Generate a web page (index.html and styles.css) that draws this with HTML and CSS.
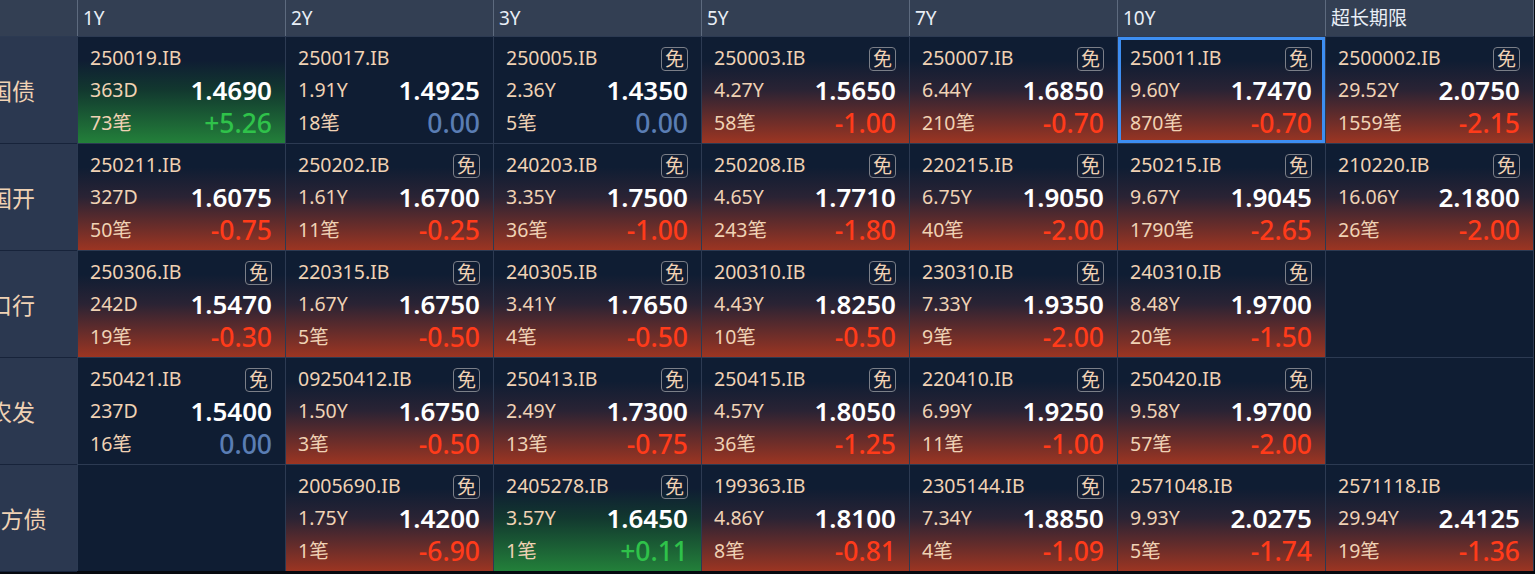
FILE: index.html
```html
<!DOCTYPE html>
<html lang="zh">
<head>
<meta charset="utf-8">
<title>Bond Grid</title>
<link rel="stylesheet" href="styles.css">
</head>
<body>
<div class="board">
  <div class="hd hd-corner"></div>
  <div class="hd">1Y</div>
  <div class="hd">2Y</div>
  <div class="hd">3Y</div>
  <div class="hd">5Y</div>
  <div class="hd">7Y</div>
  <div class="hd">10Y</div>
  <div class="hd">超长期限</div>

  <div class="label"><span>国债</span></div>
  <div class="cell up"><div class="l1"><span>250019.IB</span></div><div class="l2"><span>363D</span><b>1.4690</b></div><div class="l3"><span>73笔</span><em>+5.26</em></div></div>
  <div class="cell flat"><div class="l1"><span>250017.IB</span></div><div class="l2"><span>1.91Y</span><b>1.4925</b></div><div class="l3"><span>18笔</span><em>0.00</em></div></div>
  <div class="cell flat"><div class="l1"><span>250005.IB</span><i class="tag">免</i></div><div class="l2"><span>2.36Y</span><b>1.4350</b></div><div class="l3"><span>5笔</span><em>0.00</em></div></div>
  <div class="cell down"><div class="l1"><span>250003.IB</span><i class="tag">免</i></div><div class="l2"><span>4.27Y</span><b>1.5650</b></div><div class="l3"><span>58笔</span><em>-1.00</em></div></div>
  <div class="cell down"><div class="l1"><span>250007.IB</span><i class="tag">免</i></div><div class="l2"><span>6.44Y</span><b>1.6850</b></div><div class="l3"><span>210笔</span><em>-0.70</em></div></div>
  <div class="cell down selected"><div class="l1"><span>250011.IB</span><i class="tag">免</i></div><div class="l2"><span>9.60Y</span><b>1.7470</b></div><div class="l3"><span>870笔</span><em>-0.70</em></div></div>
  <div class="cell down"><div class="l1"><span>2500002.IB</span><i class="tag">免</i></div><div class="l2"><span>29.52Y</span><b>2.0750</b></div><div class="l3"><span>1559笔</span><em>-2.15</em></div></div>

  <div class="label"><span>国开</span></div>
  <div class="cell down"><div class="l1"><span>250211.IB</span></div><div class="l2"><span>327D</span><b>1.6075</b></div><div class="l3"><span>50笔</span><em>-0.75</em></div></div>
  <div class="cell down"><div class="l1"><span>250202.IB</span><i class="tag">免</i></div><div class="l2"><span>1.61Y</span><b>1.6700</b></div><div class="l3"><span>11笔</span><em>-0.25</em></div></div>
  <div class="cell down"><div class="l1"><span>240203.IB</span><i class="tag">免</i></div><div class="l2"><span>3.35Y</span><b>1.7500</b></div><div class="l3"><span>36笔</span><em>-1.00</em></div></div>
  <div class="cell down"><div class="l1"><span>250208.IB</span><i class="tag">免</i></div><div class="l2"><span>4.65Y</span><b>1.7710</b></div><div class="l3"><span>243笔</span><em>-1.80</em></div></div>
  <div class="cell down"><div class="l1"><span>220215.IB</span><i class="tag">免</i></div><div class="l2"><span>6.75Y</span><b>1.9050</b></div><div class="l3"><span>40笔</span><em>-2.00</em></div></div>
  <div class="cell down"><div class="l1"><span>250215.IB</span><i class="tag">免</i></div><div class="l2"><span>9.67Y</span><b>1.9045</b></div><div class="l3"><span>1790笔</span><em>-2.65</em></div></div>
  <div class="cell down"><div class="l1"><span>210220.IB</span><i class="tag">免</i></div><div class="l2"><span>16.06Y</span><b>2.1800</b></div><div class="l3"><span>26笔</span><em>-2.00</em></div></div>

  <div class="label"><span>口行</span></div>
  <div class="cell down"><div class="l1"><span>250306.IB</span><i class="tag">免</i></div><div class="l2"><span>242D</span><b>1.5470</b></div><div class="l3"><span>19笔</span><em>-0.30</em></div></div>
  <div class="cell down"><div class="l1"><span>220315.IB</span><i class="tag">免</i></div><div class="l2"><span>1.67Y</span><b>1.6750</b></div><div class="l3"><span>5笔</span><em>-0.50</em></div></div>
  <div class="cell down"><div class="l1"><span>240305.IB</span><i class="tag">免</i></div><div class="l2"><span>3.41Y</span><b>1.7650</b></div><div class="l3"><span>4笔</span><em>-0.50</em></div></div>
  <div class="cell down"><div class="l1"><span>200310.IB</span><i class="tag">免</i></div><div class="l2"><span>4.43Y</span><b>1.8250</b></div><div class="l3"><span>10笔</span><em>-0.50</em></div></div>
  <div class="cell down"><div class="l1"><span>230310.IB</span><i class="tag">免</i></div><div class="l2"><span>7.33Y</span><b>1.9350</b></div><div class="l3"><span>9笔</span><em>-2.00</em></div></div>
  <div class="cell down"><div class="l1"><span>240310.IB</span><i class="tag">免</i></div><div class="l2"><span>8.48Y</span><b>1.9700</b></div><div class="l3"><span>20笔</span><em>-1.50</em></div></div>
  <div class="cell empty"></div>

  <div class="label"><span>农发</span></div>
  <div class="cell flat"><div class="l1"><span>250421.IB</span><i class="tag">免</i></div><div class="l2"><span>237D</span><b>1.5400</b></div><div class="l3"><span>16笔</span><em>0.00</em></div></div>
  <div class="cell down"><div class="l1"><span>09250412.IB</span><i class="tag">免</i></div><div class="l2"><span>1.50Y</span><b>1.6750</b></div><div class="l3"><span>3笔</span><em>-0.50</em></div></div>
  <div class="cell down"><div class="l1"><span>250413.IB</span><i class="tag">免</i></div><div class="l2"><span>2.49Y</span><b>1.7300</b></div><div class="l3"><span>13笔</span><em>-0.75</em></div></div>
  <div class="cell down"><div class="l1"><span>250415.IB</span><i class="tag">免</i></div><div class="l2"><span>4.57Y</span><b>1.8050</b></div><div class="l3"><span>36笔</span><em>-1.25</em></div></div>
  <div class="cell down"><div class="l1"><span>220410.IB</span><i class="tag">免</i></div><div class="l2"><span>6.99Y</span><b>1.9250</b></div><div class="l3"><span>11笔</span><em>-1.00</em></div></div>
  <div class="cell down"><div class="l1"><span>250420.IB</span><i class="tag">免</i></div><div class="l2"><span>9.58Y</span><b>1.9700</b></div><div class="l3"><span>57笔</span><em>-2.00</em></div></div>
  <div class="cell empty"></div>

  <div class="label"><span>地方债</span></div>
  <div class="cell empty"></div>
  <div class="cell down"><div class="l1"><span>2005690.IB</span><i class="tag">免</i></div><div class="l2"><span>1.75Y</span><b>1.4200</b></div><div class="l3"><span>1笔</span><em>-6.90</em></div></div>
  <div class="cell up"><div class="l1"><span>2405278.IB</span><i class="tag">免</i></div><div class="l2"><span>3.57Y</span><b>1.6450</b></div><div class="l3"><span>1笔</span><em>+0.11</em></div></div>
  <div class="cell down"><div class="l1"><span>199363.IB</span></div><div class="l2"><span>4.86Y</span><b>1.8100</b></div><div class="l3"><span>8笔</span><em>-0.81</em></div></div>
  <div class="cell down"><div class="l1"><span>2305144.IB</span><i class="tag">免</i></div><div class="l2"><span>7.34Y</span><b>1.8850</b></div><div class="l3"><span>4笔</span><em>-1.09</em></div></div>
  <div class="cell down"><div class="l1"><span>2571048.IB</span></div><div class="l2"><span>9.93Y</span><b>2.0275</b></div><div class="l3"><span>5笔</span><em>-1.74</em></div></div>
  <div class="cell down"><div class="l1"><span>2571118.IB</span></div><div class="l2"><span>29.94Y</span><b>2.4125</b></div><div class="l3"><span>19笔</span><em>-1.36</em></div></div>
</div>
</body>
</html>
```

FILE: styles.css
```css
html, body {
  margin: 0;
  padding: 0;
  background: #06090f;
  height: 574px;
  overflow: hidden;
}

body {
  font-family: "Noto Sans", "Noto Sans CJK SC", sans-serif;
  color: #f0d2b4;
}

.board {
  display: grid;
  grid-template-columns: 77px repeat(7, 207px);
  grid-template-rows: 36px repeat(5, 106px);
  gap: 1px;
  width: 1534px;
  background: #2c3a52;
}

.hd {
  background: #333f53;
  color: #e8eef6;
  font-size: 19px;
  line-height: 1;
  display: flex;
  align-items: center;
  padding-left: 5px;
  box-shadow: 1px 0 0 #5d6a7e;
}

.hd-corner {
  padding-left: 0;
}

.label {
  background: #2b3850;
  overflow: hidden;
  display: flex;
  align-items: center;
  box-shadow: 0 1px 0 #17233a;
}

.label span {
  display: block;
  flex: none;
  width: 134px;
  margin-left: -55px;
  text-align: center;
  font-size: 23px;
  line-height: 1;
  color: #f0d2b4;
  padding-top: 2px;
}

.cell {
  background: #0f1d33;
  display: grid;
  grid-template-rows: 30px 34px 32px;
  padding: 6px 13px 0 12px;
}

.cell.down {
  background: linear-gradient(to bottom, #0f1d33 22%, #2a2334 50%, #9c3522 100%);
}

.cell.up {
  background: linear-gradient(to bottom, #0f1d33 22%, #12382f 50%, #23803a 100%);
}

.cell.selected {
  box-shadow: inset 0 0 0 3px #3d8ef2;
}

.l1, .l2, .l3 {
  display: flex;
  align-items: center;
  justify-content: space-between;
  line-height: 1;
}

.l1 span, .l2 span, .l3 span {
  font-size: 19.5px;
  color: #f0d2b4;
}

.tag {
  font-style: normal;
  width: 25px;
  height: 22px;
  border: 1px solid #7b7f88;
  border-radius: 4px;
  font-size: 19px;
  display: flex;
  align-items: center;
  justify-content: center;
  color: #f0d2b4;
  margin-top: 2px;
}

.l2 b {
  font-size: 26px;
  font-weight: 600;
  color: #ffffff;
}

.l3 em {
  font-style: normal;
  font-size: 26.5px;
  font-weight: 500;
  color: #ff3b1a;
}

.up .l3 em {
  color: #2fc24a;
}

.flat .l3 em {
  color: #5a7db4;
}
```
